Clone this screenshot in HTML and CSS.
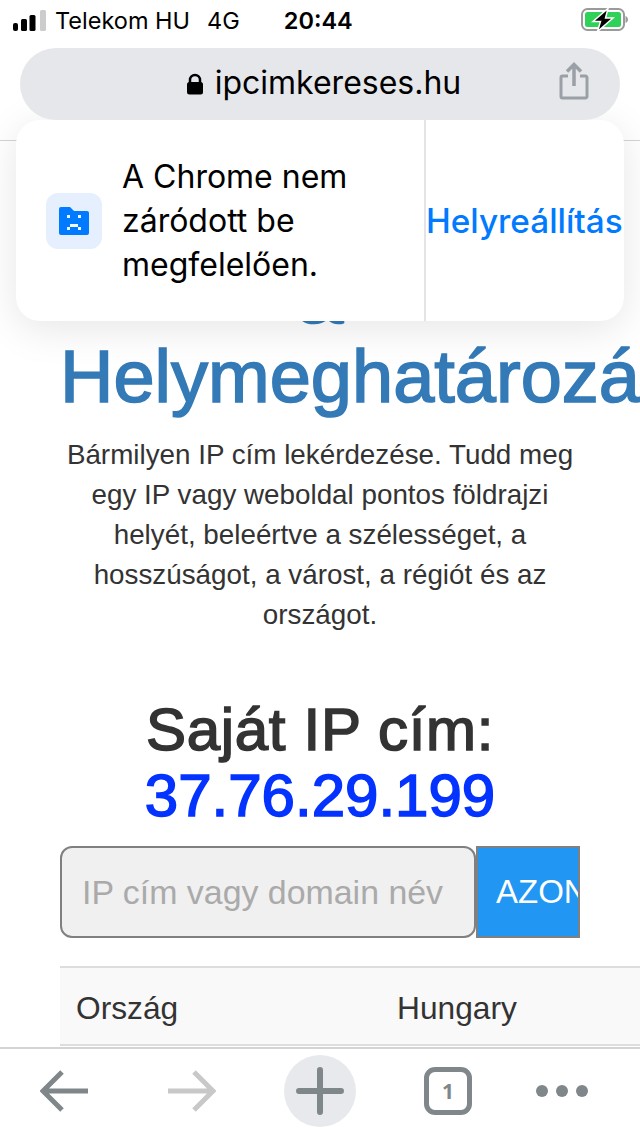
FILE: index.html
```html
<!DOCTYPE html>
<html lang="hu">
<head>
<meta charset="utf-8">
<title>ipcimkereses.hu</title>
<link rel="stylesheet" href="styles.css">
</head>
<body>
<div class="phone">
  <header class="chrome-top">
    <div class="status">
      <svg class="signal" width="34" height="22" viewBox="0 0 34 22">
        <rect x="0" y="13" width="5" height="8" rx="2" fill="#000"/>
        <rect x="8" y="9" width="6" height="12" rx="1.5" fill="#000"/>
        <rect x="16.500" y="5" width="6" height="16" rx="1.500" fill="#000"/>
        <rect x="27" y="0" width="6" height="21" rx="1.500" fill="#ccc"/>
      </svg>
      <span class="carrier">Telekom HU</span>
      <span class="net">4G</span>
      <span class="time">20:44</span>
      <svg class="battery" width="48" height="24" viewBox="0 0 48 24">
        <rect x="1" y="1" width="42" height="21" rx="5.500" fill="#fff" stroke="#9a9a9a" stroke-width="2"/>
        <rect x="4" y="4" width="36" height="15" rx="2.500" fill="#30d158"/>
        <path d="M44.500 8v7c1.500-.5 2.500-2 2.500-3.500S46 8.500 44.500 8z" fill="#9a9a9a"/>
        <path d="M27 0.500 12 13.500h7.500l-3 10L32 10h-7.500z" fill="#000" stroke="#fff" stroke-width="1.500"/>
      </svg>
    </div>
    <div class="address">
      <div class="url">
        <svg class="lock" width="18" height="22" viewBox="0 0 18 22">
          <path d="M4 10V7a5 5 0 0 1 10 0v3" fill="none" stroke="#000" stroke-width="2.500"/>
          <rect x="1" y="9" width="16" height="12.500" rx="2.500" fill="#000"/>
        </svg>
        <span>ipcimkereses.hu</span>
      </div>
      <svg class="share" width="30" height="38" viewBox="0 0 30 38">
        <path d="M9 14H3.500A1.500 1.500 0 0 0 2 15.500v19A1.500 1.500 0 0 0 3.500 36h23a1.500 1.500 0 0 0 1.500-1.500v-19a1.500 1.500 0 0 0-1.500-1.500H21" fill="none" stroke="#9aa0a6" stroke-width="3"/>
        <path d="M15 24V3M8 9.500 15 2.500l7 7" fill="none" stroke="#9aa0a6" stroke-width="3.500"/>
      </svg>
    </div>
  </header>

  <main class="page">
    <h1 class="title">&amp; Helymeghatározás</h1>
    <p class="lead">Bármilyen IP cím lekérdezése. Tudd meg egy IP vagy weboldal pontos földrajzi helyét, beleértve a szélességet, a hosszúságot, a várost, a régiót és az országot.</p>
    <h2 class="own-ip"><span class="own-label">Saját IP cím:</span><br><span class="ip">37.76.29.199</span></h2>
    <form class="search">
      <input class="search-input" type="text" placeholder="IP cím vagy domain név">
      <button class="search-btn" type="button">AZONOSÍTÁS</button>
    </form>
    <div class="table">
      <div class="row"><span>Ország</span><span>Hungary</span></div>
    </div>
  </main>

  <nav class="toolbar">
    <svg class="tool" width="48" height="44" viewBox="0 0 48 44">
      <path d="M48 22H3M22 3 3 22l19 19" fill="none" stroke="#80878a" stroke-width="5"/>
    </svg>
    <svg class="tool" width="48" height="44" viewBox="0 0 48 44">
      <path d="M0 22h45M26 3l19 19-19 19" fill="none" stroke="#c8c8c8" stroke-width="5"/>
    </svg>
    <div class="plus">
      <svg width="48" height="48" viewBox="0 0 48 48">
        <path d="M3 24h42M24 3v42" fill="none" stroke="#80878a" stroke-width="6" stroke-linecap="round"/>
      </svg>
    </div>
    <div class="tabs">1</div>
    <svg class="dots" width="52" height="12" viewBox="0 0 52 12">
      <circle cx="6" cy="6" r="6" fill="#80878a"/>
      <circle cx="26" cy="6" r="6" fill="#80878a"/>
      <circle cx="46" cy="6" r="6" fill="#80878a"/>
    </svg>
  </nav>

  <aside class="toast">
    <div class="toast-body">
      <div class="toast-icon">
        <svg width="30" height="28" viewBox="0 0 30 28">
          <path d="M0 2a2 2 0 0 1 2-2h9l4 4h13a2 2 0 0 1 2 2v20a2 2 0 0 1-2 2H2a2 2 0 0 1-2-2z" fill="#007aff"/>
          <path d="M8 8h3v3H8zM19 8h3v3h-3zM11 17h8v3h-8zM8 20h3v3H8zM19 20h3v3h-3z" fill="#f2f7ff"/>
        </svg>
      </div>
      <p class="toast-text">A Chrome nem záródott be megfelelően.</p>
    </div>
    <div class="toast-action">Helyreállítás</div>
  </aside>
</div>
</body>
</html>
```

FILE: styles.css
```css
* { box-sizing: border-box; }
html, body { margin: 0; padding: 0; }
body { background: #fff; font-family: "Liberation Sans", Arial, sans-serif; color: #333; }
.phone { position: relative; width: 640px; height: 1136px; overflow: hidden; display: flex; flex-direction: column; }

.chrome-top { height: 141px; flex: none; border-bottom: 1px solid #d4d4d4; background: #fff; font-family: Inter, sans-serif; color: #000; }
.status { height: 48px; display: flex; align-items: center; padding: 0 13px; font-size: 23.500px; position: relative; }
.signal { margin-top: -6px; }
.carrier { margin-left: 8px; margin-top: -7px; }
.net { margin-left: 17px; margin-top: -7px; }
.time { margin-left: 44px; margin-top: -7px; font-weight: 600; }
.battery { margin-left: auto; margin-top: -9px; margin-right: -2px; }

.address { height: 72px; margin: 0 20px; background: #e6e7eb; border-radius: 36px; display: flex; align-items: center; position: relative; z-index: 2; }
.url { flex: 1; display: flex; align-items: center; justify-content: center; gap: 11px; font-size: 32px; margin-top: -3px; padding-left: 7px; }
.lock { flex: none; margin-top: 3px; }
.share { position: absolute; right: 31px; top: 14px; }

.page { flex: 1; min-height: 0; overflow: hidden; padding: 117px 60px 0; }
.title { margin: 0 0 19px; font-size: 74px; line-height: 79px; font-weight: 400; color: #337ab7; text-align: center; -webkit-text-stroke: 1.600px #337ab7; }
.lead { margin: 0; font-size: 27.800px; line-height: 40px; text-align: center; }
.own-ip { margin: 62px 0 17px; font-size: 60px; line-height: 66px; font-weight: 400; text-align: center; }
.own-label { letter-spacing: .7px; -webkit-text-stroke: 1.600px #333; }
.ip { color: #0433ff; -webkit-text-stroke: 1.600px #0433ff; }

.search { display: flex; }
.search-input { width: 416px; height: 92px; padding: 0 20px 0 20px; border: 2px solid #808080; border-radius: 12px; background: #f0f0f0; font: 33.900px "Liberation Sans", Arial, sans-serif; outline: none; }
.search-input::placeholder { color: #aaa; opacity: 1; }
.search-btn { width: 104px; height: 92px; padding: 0 0 0 18px; border: 2px solid #808080; border-radius: 0; background: #2196f3; color: #fff; font: 33px "Liberation Sans", Arial, sans-serif; text-align: left; white-space: nowrap; overflow: hidden; }

.table { margin-top: 28px; width: 580px; border-top: 2px solid #ddd; }
.row { display: grid; grid-template-columns: 321px 1fr; height: 78px; padding: 4px 0 0 16px; align-items: center; background: #f9f9f9; border-bottom: 2px solid #ddd; font-size: 31.700px; }

.toolbar { height: 89px; flex: none; background: #fff; border-top: 2px solid #d4d4d4; padding-bottom: 4px; display: grid; grid-template-columns: repeat(5, 128px); align-items: center; justify-items: center; }
.plus { width: 72px; height: 72px; border-radius: 50%; background: #e8e9ed; display: flex; align-items: center; justify-content: center; }
.tabs { width: 48px; height: 48px; border: 5px solid #80878a; border-radius: 11px; display: flex; align-items: center; justify-content: center; font: 700 21px "Open Sans", sans-serif; color: #80878a; }
.dots { margin-right: 28px; }

.toast { position: absolute; left: 16px; top: 120px; width: 608px; height: 201px; background: #fff; border-radius: 24px; box-shadow: 0 8px 40px rgba(0,0,0,.1); display: flex; font-family: Inter, sans-serif; color: #000; }
.toast-body { width: 410px; flex: none; border-right: 2px solid #e4e4e4; display: flex; align-items: center; padding-left: 30px; gap: 20px; }
.toast-icon { width: 56px; height: 56px; flex: none; background: #e5effd; border-radius: 12px; display: flex; align-items: center; justify-content: center; }
.toast-text { margin: 0; font-size: 32px; line-height: 44px; width: 260px; }
.toast-action { flex: 1; display: flex; align-items: center; justify-content: center; font-size: 33.300px; font-weight: 500; color: #007aff; white-space: nowrap; padding-right: 3px; }
```
